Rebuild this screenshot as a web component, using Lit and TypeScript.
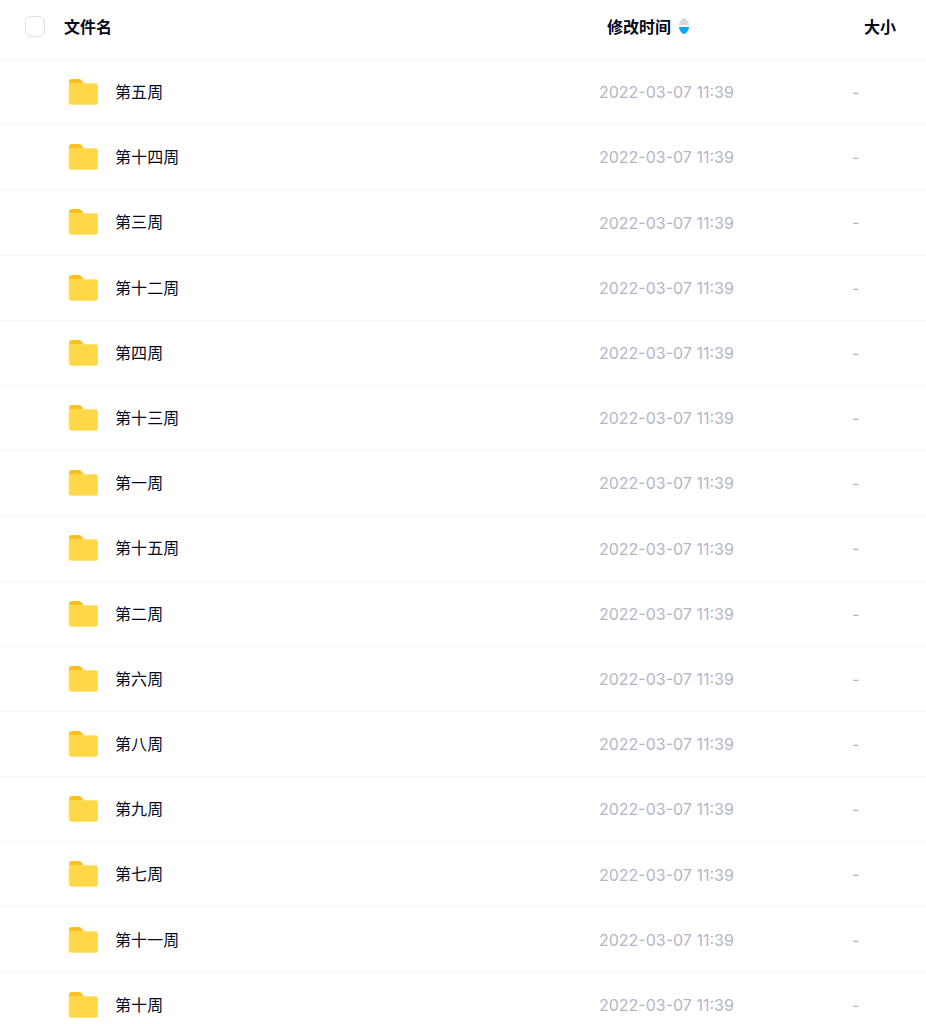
import { LitElement, html, css, svg } from "lit";
import { customElement } from "lit/decorators.js";

const NAMES = ["第五周","第十四周","第三周","第十二周","第四周","第十三周","第一周","第十五周","第二周","第六周","第八周","第九周","第七周","第十一周","第十周"];

const folder = svg`<svg class="folder" width="30" height="30" viewBox="0 0 30 30" aria-hidden="true">
  <path d="M1 3.500C1 2.100 2.100 1 3.500 1H10.500c1.400 0 2.400.5 3.300 1.500L16 6H1z" fill="#ffc01f"/>
  <path d="M1 6.500C1 5.500 1.800 5 2.600 5H14.600L16.600 5.500H27.500C29 5.500 30 6.500 30 8V24C30 25.500 29 26.500 27.500 26.500H3.500C2 26.500 1 25.500 1 24Z" fill="#ffd84a"/>
  <path d="M1 7V24C1 25.500 2 26.500 3.500 26.500H27.500C29 26.500 30 25.500 30 24V8C30 6.500 29 5.500 27.500 5.500H16.600" fill="none" stroke="#ffe57f" stroke-width="1"/>
</svg>`;

@customElement("app-root")
export class AppRoot extends LitElement {
  static styles = css`
    :host { display: block; width: 926px; height: 1024px; overflow: hidden; background: #fff;
      font-family: "Inter", "Noto Sans CJK SC", sans-serif; }
    .row { display: grid; grid-template-columns: 64px 1fr 134px 119px 74px; align-items: center;
      height: 65.2px; box-sizing: border-box; border-bottom: 1px solid #f7f7f9; }
    .head { height: 60px; font-weight: 700; font-size: 16px; color: #03081a; padding-bottom: 8px; }
    .check { width: 20px; height: 21px; box-sizing: border-box; border: 1px solid #dfe0ea; border-radius: 6px; margin: 2px 0 0 25px; }
    .sort-h { display: flex; align-items: center; gap: 8px; margin-left: 8px; white-space: nowrap; }
    .sort { display: block; margin-top: 1px; }
    .size-h { margin-left: 12px; white-space: nowrap; }
    .name { display: flex; align-items: center; gap: 17px; padding-left: 4px; font-size: 16px; color: #050a24; }
    .name span { padding-bottom: 2px; letter-spacing: 0.1px; }
    .folder { display: block; flex: none; margin-top: 2px; }
    .date { font-size: 16px; color: #b4b6c7; white-space: nowrap; padding-top: 0.4px; }
    .dash { font-size: 16px; color: #b4b6c7; }
  `;
  render() {
    return html`
      <div class="row head">
        <div class="check"></div>
        <div>文件名</div>
        <div class="sort-h">修改时间
          <svg class="sort" width="10" height="16" viewBox="0 0 10 16" aria-hidden="true">
            <path d="M5 0C6.500 0 10 3.500 10 7H0C0 3.500 3.500 0 5 0Z" fill="#d7d9e2"/>
            <path d="M0 9H10C10 12.500 6.500 16 5 16C3.500 16 0 12.500 0 9Z" fill="#06a7ff"/>
          </svg>
        </div>
        <div></div>
        <div class="size-h">大小</div>
      </div>
      ${NAMES.map((n) => html`
        <div class="row">
          <div></div>
          <div class="name">${folder}<span>${n}</span></div>
          <div class="date">2022-03-07 11:39</div>
          <div></div>
          <div class="dash">-</div>
        </div>`)}
    `;
  }
}
